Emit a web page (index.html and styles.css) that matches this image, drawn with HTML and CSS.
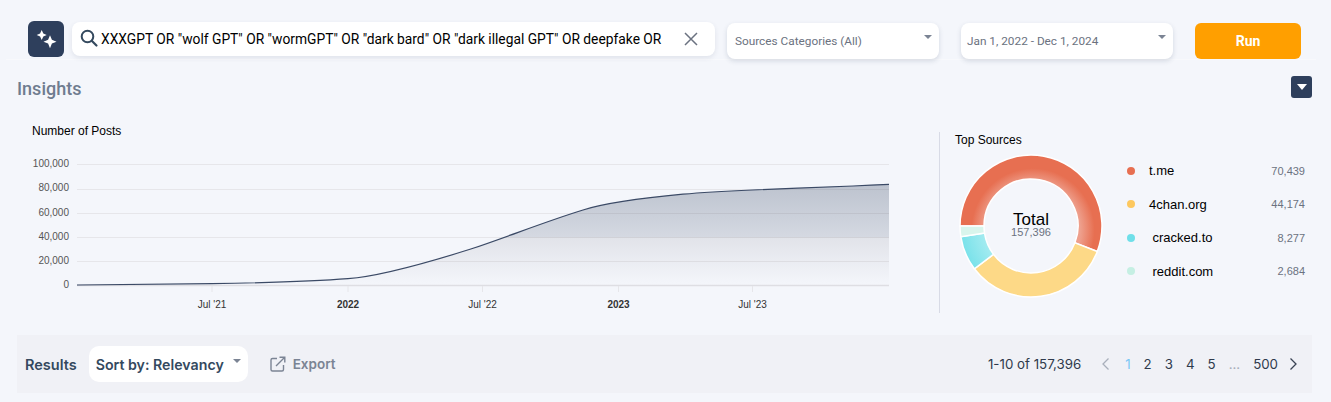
FILE: index.html
```html
<!doctype html>
<html>
  <head>
    <meta charset="utf-8" />
    <title>Insights</title>
    <link rel="stylesheet" href="styles.css">
  </head>
  <body>
    <header class="search-bar">
      <button class="ai-btn">
        <svg width="24" height="24" viewBox="0 0 24 24"><path fill="#fff" d="M7.7 3l1.6 3.400L12.700 8l-3.400 1.600L7.700 13l-1.600-3.400L2.700 8l3.400-1.600z"/><path fill="#fff" d="M16 8.200l1.900 4.600 4.600 1.900-4.600 1.900L16 21.200l-1.900-4.600-4.600-1.900 4.600-1.900z"/></svg>
      </button>
      <div class="query">
        <svg class="query-icon" width="20" height="20" viewBox="0 0 20 20"><circle cx="7.500" cy="7.500" r="5.800" fill="none" stroke="#34495e" stroke-width="2"/><path d="M12 12L16.500 16.500" stroke="#34495e" stroke-width="2.200" stroke-linecap="round"/></svg>
        <span class="query-text">XXXGPT OR "wolf GPT" OR "wormGPT" OR "dark bard" OR "dark illegal GPT" OR deepfake OR</span>
        <svg class="query-clear" width="14" height="14" viewBox="0 0 14 14"><path d="M1 1l12 12M13 1L1 13" stroke="#6b7280" stroke-width="1.500"/></svg>
      </div>
      <div class="select select-sources"><span>Sources Categories (All)</span><i class="caret"></i></div>
      <div class="select select-dates"><span>Jan 1, 2022 - Dec 1, 2024</span><i class="caret"></i></div>
      <button class="run-btn">Run</button>
    </header>

    <section class="insights">
      <div class="insights-head">
        <h2>Insights</h2>
        <button class="collapse-btn"><i></i></button>
      </div>
      <div class="charts">
        <div class="posts-chart">
          <h3>Number of Posts</h3>
          <svg class="posts-svg" width="880" height="178" viewBox="0 0 880 178">
            <defs>
              <linearGradient id="area" x1="0" y1="0" x2="0" y2="1">
                <stop offset="0" stop-color="#2e3f5c" stop-opacity="0.28"/>
                <stop offset="0.52" stop-color="#2e3f5c" stop-opacity="0.16"/>
                <stop offset="0.53" stop-color="#4a4a5a" stop-opacity="0.11"/>
                <stop offset="1" stop-color="#4a4a5a" stop-opacity="0"/>
              </linearGradient>
            </defs>
            <g class="grid">
              <path d="M60 27.500H872M60 52.500H872M60 76.500H872M60 100.500H872M60 124.500H872"/>
              <path class="axis" d="M60 148.500H872"/>
              <path class="tick" d="M195 149v6M331 149v6M465.500 149v6M601.500 149v6M735.500 149v6"/>
            </g>
            <path fill="url(#area)" d="M60 148C105 147.800 150 147.400 195 146.700C245 145.800 295 144.600 331 141.700C360 139.500 400 129 453 112.300C490 100 530 84 566 73C590 65.500 625 61 666 57.200C690 55 712 54 735 53C770 51.500 800 50.200 836 49C848 48.500 860 47.800 872 47.300V148.500H60Z"/>
            <path class="line" d="M60 148C105 147.800 150 147.400 195 146.700C245 145.800 295 144.600 331 141.700C360 139.500 400 129 453 112.300C490 100 530 84 566 73C590 65.500 625 61 666 57.200C690 55 712 54 735 53C770 51.500 800 50.200 836 49C848 48.500 860 47.800 872 47.300"/>
            <g class="y-labels">
              <text x="52" y="30">100,000</text>
              <text x="52" y="54">80,000</text>
              <text x="52" y="79">60,000</text>
              <text x="52" y="103">40,000</text>
              <text x="52" y="127">20,000</text>
              <text x="52" y="151">0</text>
            </g>
            <g class="x-labels">
              <text x="195" y="171">Jul '21</text>
              <text class="year" x="331" y="171">2022</text>
              <text x="465.500" y="171">Jul '22</text>
              <text class="year" x="601.500" y="171">2023</text>
              <text x="735.500" y="171">Jul '23</text>
            </g>
          </svg>
        </div>
        <div class="top-sources">
          <h3>Top Sources</h3>
          <div class="sources-body">
            <svg class="donut" width="144" height="144" viewBox="-72 -72 144 144">
              <defs>
                <radialGradient id="red" gradientUnits="userSpaceOnUse" cx="2" cy="4" r="70">
                  <stop offset="0.68" stop-color="#ee9f8c"/>
                  <stop offset="0.88" stop-color="#e76f51"/>
                </radialGradient>
                <radialGradient id="cyan" gradientUnits="userSpaceOnUse" cx="0" cy="0" r="71">
                  <stop offset="0.66" stop-color="#a4ebf0"/>
                  <stop offset="1" stop-color="#79e2ea"/>
                </radialGradient>
              </defs>
              <g stroke="#fff" stroke-width="1.500">
                <path fill="url(#red)" d="M-71 0A71 71 0 1 1 66.280 25.450L43.880 16.840A47 47 0 1 0 -47 0Z"/>
                <path fill="#fdd987" d="M66.280 25.450A71 71 0 0 1 -56.650 42.800L-37.500 28.330A47 47 0 0 0 43.880 16.840Z"/>
                <path fill="url(#cyan)" d="M-56.650 42.800A71 71 0 0 1 -70.200 10.690L-46.470 7.080A47 47 0 0 0 -37.500 28.330Z"/>
                <path fill="#d9f5ec" d="M-70.200 10.690A71 71 0 0 1 -71 0L-47 0A47 47 0 0 0 -46.470 7.080Z"/>
              </g>
            </svg>
            <div class="donut-center"><b>Total</b><span>157,396</span></div>
            <ul class="legend">
              <li><i class="dot dot-red"></i><span class="name">t.me</span><span class="count">70,439</span></li>
              <li><i class="dot dot-yellow"></i><span class="name">4chan.org</span><span class="count">44,174</span></li>
              <li><i class="dot dot-cyan"></i><span class="name pad">cracked.to</span><span class="count">8,277</span></li>
              <li><i class="dot dot-mint"></i><span class="name pad">reddit.com</span><span class="count">2,684</span></li>
            </ul>
          </div>
        </div>
      </div>
    </section>

    <section class="results">
      <strong class="results-title">Results</strong>
      <div class="sort"><span>Sort by: Relevancy</span><i class="caret"></i></div>
      <a class="export">
        <svg width="16" height="16" viewBox="0 0 16 16" fill="none" stroke="#7b8494" stroke-width="1.400"><path d="M7 2.500H2.500a1.500 1.500 0 0 0-1.500 1.500v9.500a1.500 1.500 0 0 0 1.500 1.500H12a1.500 1.500 0 0 0 1.500-1.500V9"/><path d="M6 10L14.500 1.500M9.500 1.200h5.300v5.300"/></svg>
        Export
      </a>
      <div class="pager">
        <span class="range">1-10 of 157,396</span>
        <svg class="chev chev-prev" width="9" height="14" viewBox="0 0 9 14"><path d="M7.500 1.500L2 7l5.500 5.500"/></svg>
        <a class="current">1</a><a>2</a><a>3</a><a>4</a><a>5</a><a class="dots">...</a><a class="last">500</a>
        <svg class="chev" width="9" height="14" viewBox="0 0 9 14"><path d="M1.500 1.500L7 7l-5.500 5.500"/></svg>
      </div>
    </section>
  </body>
</html>
```

FILE: styles.css
```css
html,
body {
  margin: 0;
  height: 402px;
  overflow: hidden;
}
body {
  background: #f4f6fb;
  font-family: Roboto, sans-serif;
  color: #000;
}
button {
  border: none;
  padding: 0;
}
h2,
h3 {
  margin: 0;
}
.caret {
  display: block;
  width: 0;
  height: 0;
  border-left: 4px solid transparent;
  border-right: 4px solid transparent;
  border-top: 4px solid #7b8494;
}

.search-bar {
  display: flex;
  align-items: flex-start;
  height: 37px;
  margin: 0 15px 0 6px;
  padding: 22px 15px 0 22px;
  border-bottom: 1px solid #f8f9fc;
}
.ai-btn {
  width: 36px;
  height: 36px;
  margin-top: -1px;
  border-radius: 6px;
  background: #2e3f5c;
  display: flex;
  align-items: center;
  justify-content: center;
}
.query {
  width: 643px;
  height: 34px;
  margin-left: 8px;
  background: #fff;
  border-radius: 8px;
  box-shadow: 0 2px 5px rgba(46, 63, 92, 0.1);
  display: flex;
  align-items: center;
  padding-left: 8px;
  box-sizing: border-box;
}
.query-icon {
  flex: none;
}
.query-text {
  margin-left: 1px;
  font-size: 13.800px;
  white-space: nowrap;
  width: 584px;
  overflow: hidden;
}
.query-clear {
  flex: none;
  margin-left: -1px;
}
.select {
  width: 212px;
  height: 36px;
  margin-top: 1px;
  background: #fff;
  border-radius: 8px;
  box-shadow: 0 2px 5px rgba(46, 63, 92, 0.16);
  box-sizing: border-box;
  display: flex;
  justify-content: space-between;
  padding: 11px 7px 0 8px;
  font-size: 11.800px;
  color: #6b7280;
}
.select .caret {
  margin-top: 1px;
}
.select-sources {
  margin-left: 12px;
}
.select-dates {
  margin-left: 22px;
  padding-left: 6px;
}
.run-btn {
  width: 106px;
  height: 36px;
  margin: 1px 0 0 22px;
  background: #ff9f00;
  border-radius: 6px;
  color: #fff;
  font-family: Roboto, sans-serif;
  font-size: 14px;
  font-weight: 700;
}

.insights {
  margin: 0 19px 0 17px;
}
.insights-head {
  display: flex;
  justify-content: space-between;
  align-items: center;
  height: 32px;
  margin-top: 12px;
}
.insights-head h2 {
  font-size: 18px;
  font-weight: 500;
  color: #6f7c8f;
}
.collapse-btn {
  width: 21px;
  height: 22px;
  margin-top: -2px;
  border-radius: 3px;
  background: #2e3f5c;
  display: flex;
  align-items: center;
  justify-content: center;
}
.collapse-btn i {
  border-left: 5px solid transparent;
  border-right: 5px solid transparent;
  border-top: 6px solid #fff;
}
.charts {
  display: flex;
  align-items: flex-start;
  margin-top: 16px;
}
.posts-chart {
  width: 922px;
  flex: none;
}
.posts-chart h3,
.top-sources h3 {
  font-family: "Liberation Sans", Arial, sans-serif;
  font-size: 12px;
  font-weight: 400;
  line-height: 14px;
}
.posts-chart h3 {
  margin: 4px 0 0 15px;
}
.posts-svg {
  display: block;
  margin-top: -1px;
}
.posts-svg text {
  font-family: "Liberation Sans", Arial, sans-serif;
  font-size: 10px;
  fill: #555;
}
.grid path {
  fill: none;
  stroke: #e6e6ea;
  stroke-width: 1;
}
.grid .axis {
  stroke: #dedee3;
  stroke-width: 1.500;
}
.y-labels text {
  text-anchor: end;
}
.x-labels text {
  text-anchor: middle;
  fill: #333;
}
.x-labels .year {
  font-weight: 700;
}
.line {
  fill: none;
  stroke: #3b4a66;
  stroke-width: 1.200;
}

.top-sources {
  position: relative;
  width: 372px;
  height: 181px;
  margin-top: 12px;
  border-left: 1px solid #d8dbe6;
  padding-left: 15px;
  box-sizing: border-box;
}
.top-sources h3 {
  margin-top: 1px;
}
.sources-body {
  display: flex;
  align-items: flex-start;
}
.donut {
  display: block;
  margin: 7px 0 0 4px;
  flex: none;
}
.donut-center {
  position: absolute;
  left: 22px;
  top: 80px;
  width: 138px;
  text-align: center;
  font-family: "Liberation Sans", Arial, sans-serif;
}
.donut-center b {
  display: block;
  font-size: 17px;
  line-height: 15px;
  font-weight: 400;
}
.donut-center span {
  display: block;
  font-size: 11px;
  line-height: 11px;
  color: #6b7280;
}
.legend {
  list-style: none;
  margin: 7px 0 0 24px;
  padding: 0;
  width: 178px;
  font-family: "Liberation Sans", Arial, sans-serif;
}
.legend li {
  display: flex;
  align-items: center;
  height: 33.500px;
  font-size: 13px;
}
.dot {
  width: 8px;
  height: 8px;
  border-radius: 50%;
  flex: none;
}
.dot-red {
  background: #e76f51;
}
.dot-yellow {
  background: #fdc85f;
}
.dot-cyan {
  background: #6fdfe9;
}
.dot-mint {
  background: #c5efe3;
}
.name {
  margin-left: 14px;
}
.name.pad {
  margin-left: 17.500px;
}
.count {
  margin-left: auto;
  font-size: 11px;
  color: #6b7280;
}

.results {
  display: flex;
  align-items: center;
  height: 58px;
  margin: 20px 19px 0 17px;
  background: #f0f1f6;
  font-family: Inter, sans-serif;
}
.results-title {
  margin-left: 8px;
  font-size: 14.500px;
  font-weight: 600;
  color: #34495e;
}
.sort {
  display: flex;
  height: 36px;
  width: 159px;
  margin-left: 12px;
  padding: 0 7px;
  box-sizing: border-box;
  justify-content: space-between;
  align-items: center;
  background: #fff;
  border-radius: 10px;
  font-size: 14.200px;
  font-weight: 600;
  color: #34495e;
}
.sort .caret {
  margin: -6px 0 0 0;
}
.export {
  display: flex;
  align-items: center;
  gap: 7px;
  margin-left: 22px;
  font-size: 13.500px;
  font-weight: 600;
  color: #7b8494;
}
.pager {
  display: flex;
  align-items: center;
  margin-left: auto;
  margin-right: 14px;
  font-size: 13.300px;
  color: #2f3a4c;
}
.range {
  margin-right: 20px;
}
.chev {
  fill: none;
  stroke: #3a4354;
  stroke-width: 1.300;
}
.chev-prev {
  stroke: #a9afbb;
  margin-right: 15px;
}
.pager a {
  margin-right: 13px;
}
.pager .last {
  margin-right: 11px;
}
.pager .current {
  color: #7cc7f5;
}
.pager .dots {
  color: #a9afbb;
}
```
